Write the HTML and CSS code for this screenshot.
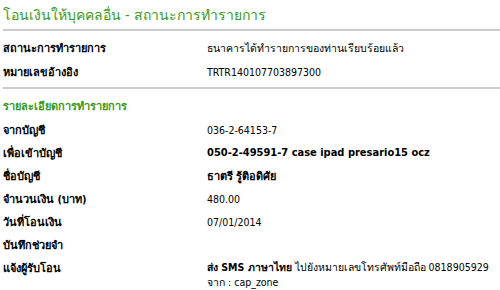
FILE: index.html
```html
<!DOCTYPE html>
<html lang="th">

<head>
    <meta charset="UTF-8">
    <title>โอนเงินให้บุคคลอื่น</title>
    <link rel="stylesheet" href="styles.css">
</head>

<body>
    <h1 class="title">โอนเงินให้บุคคลอื่น - สถานะการทำรายการ</h1>
    <div class="block status">
        <div class="row"><span class="label">สถานะการทำรายการ</span><span class="value">ธนาคารได้ทำรายการของท่านเรียบร้อยแล้ว</span></div>
        <div class="row"><span class="label">หมายเลขอ้างอิง</span><span class="value">TRTR140107703897300</span></div>
    </div>
    <div class="block detail">
        <h2 class="section">รายละเอียดการทำรายการ</h2>
        <div class="row"><span class="label">จากบัญชี</span><span class="value">036-2-64153-7</span></div>
        <div class="row"><span class="label">เพื่อเข้าบัญชี</span><span class="value strong">050-2-49591-7 case ipad presario15 ocz</span></div>
        <div class="row"><span class="label">ชื่อบัญชี</span><span class="value strong">ธาตรี รู้ติอดิศัย</span></div>
        <div class="row"><span class="label">จำนวนเงิน (บาท)</span><span class="value">480.00</span></div>
        <div class="row"><span class="label">วันที่โอนเงิน</span><span class="value">07/01/2014</span></div>
        <div class="row"><span class="label">บันทึกช่วยจำ</span><span class="value"></span></div>
        <div class="row sms"><span class="label">แจ้งผู้รับโอน</span><span class="value"><b>ส่ง SMS ภาษาไทย</b> ไปยังหมายเลขโทรศัพท์มือถือ 0818905929<br>จาก : cap_zone</span></div>
    </div>
</body>

</html>
```

FILE: styles.css
```css
* {
    padding: 0;
    margin: 0;
}

body {
    font-family: "DejaVu Sans Condensed", "DejaVu Sans", sans-serif;
    font-size: 11px;
    color: #000;
    background: #fff;
    padding-left: 3px;
}

.title {
    font-size: 14px;
    font-weight: normal;
    color: #3a9a22;
    height: 27px;
    padding-top: 2px;
    line-height: 26px;
    white-space: nowrap;
}

.block {
    border-top: #cbcbcb solid 2px;
}

.status {
    padding: 5px 0 3px;
}

.status .row {
    height: 24px;
}

.detail {
    padding-top: 7px;
}

.section {
    font-size: 11px;
    font-weight: bold;
    color: #3a9a22;
    height: 22px;
    line-height: 22px;
}

.row {
    display: flex;
    height: 23px;
    align-items: center;
    font-weight: bold;
}

.label {
    width: 204px;
    flex: none;
}

.value {
    font-size: 10.5px;
    font-weight: normal;
    white-space: nowrap;
}

.value.strong {
    font-size: 11px;
    font-weight: bold;
}

.sms {
    height: auto;
    padding-top: 4px;
    line-height: 15px;
    align-items: flex-start;
}

.sms .label {
    padding-top: 1px;
}
```
